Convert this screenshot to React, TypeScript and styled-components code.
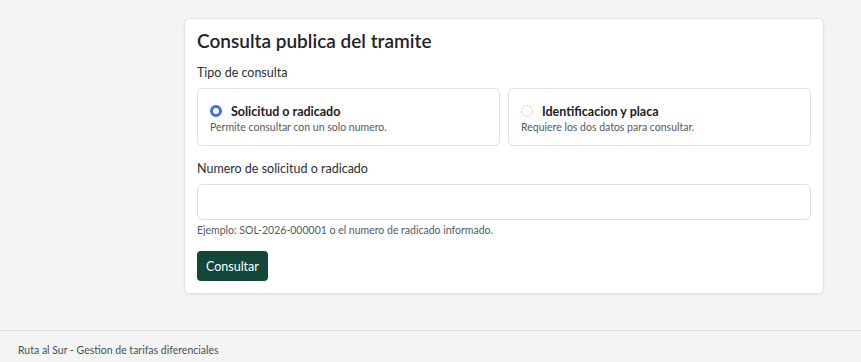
import { useState } from "react";
import styled, { createGlobalStyle } from "styled-components";

const GlobalStyle = createGlobalStyle`
  html, body {
    margin: 0;
    padding: 0;
    background: #f3f4f3;
  }
  body {
    font-family: "Segoe UI", Lato, "Noto Sans", sans-serif;
    color: #212529;
  }
  * {
    box-sizing: border-box;
  }
`;

const Page = styled.div`
  display: flex;
  flex-direction: column;
`;

const Main = styled.main`
  padding: 18px 37px 36px 184px;
`;

const Card = styled.section`
  background: #ffffff;
  border: 1px solid #e3e5e4;
  border-radius: 6px;
  box-shadow: 0 1px 3px rgba(0, 0, 0, 0.08);
  padding: 8px 12px 12px;
`;

const Title = styled.h1`
  margin: 0 0 9px;
  font-size: 19px;
  font-weight: 600;
  line-height: 28px;
  color: #1f2328;
`;

const Label = styled.div`
  font-size: 12.5px;
  line-height: 18px;
  margin-bottom: 6px;
  color: #2b2f33;
`;

const Options = styled.div`
  display: grid;
  grid-template-columns: 1fr 1fr;
  gap: 8px;
  margin-bottom: 14px;
`;

const Option = styled.label`
  display: flex;
  flex-direction: column;
  height: 58px;
  padding: 13px 12px 0;
  border: 1px solid #dfe1e3;
  border-radius: 5px;
  cursor: pointer;
`;

const OptionHead = styled.div`
  display: flex;
  align-items: center;
  gap: 9px;
  height: 18px;
`;

const Radio = styled.span<{ $checked: boolean }>`
  width: 12px;
  height: 12px;
  border-radius: 50%;
  flex: none;
  background: #fff;
  border: ${(p) => (p.$checked ? "3.5px solid #3f6ff2" : "1px solid #d9dcdf")};
`;

const OptionTitle = styled.span`
  font-size: 12.5px;
  font-weight: 700;
  color: #1d2125;
`;

const OptionText = styled.span`
  font-size: 10.5px;
  line-height: 15px;
  color: #55595e;
`;

const Input = styled.input`
  display: block;
  width: 100%;
  height: 36px;
  border: 1px solid #dcdfe1;
  border-radius: 6px;
  padding: 0 10px;
  font: inherit;
  outline: none;
`;

const Help = styled.div`
  font-size: 10.5px;
  line-height: 15px;
  margin-top: 3px;
  color: #55595e;
`;

const Button = styled.button`
  margin-top: 13px;
  height: 30px;
  padding: 0 9px;
  border: none;
  border-radius: 4px;
  background: #13473a;
  color: #ffffff;
  font-family: inherit;
  font-size: 12.5px;
  cursor: pointer;
`;

const Footer = styled.footer`
  border-top: 1px solid #dcdedd;
  padding: 12px 18px;
  font-size: 10.5px;
  line-height: 15px;
  color: #4b4f54;
`;

export default function App() {
  const [tipo, setTipo] = useState<"radicado" | "placa">("radicado");

  return (
    <Page>
      <GlobalStyle />
      <Main>
        <Card>
          <Title>Consulta publica del tramite</Title>
          <Label>Tipo de consulta</Label>
          <Options>
            <Option onClick={() => setTipo("radicado")}>
              <OptionHead>
                <Radio $checked={tipo === "radicado"} />
                <OptionTitle>Solicitud o radicado</OptionTitle>
              </OptionHead>
              <OptionText>Permite consultar con un solo numero.</OptionText>
            </Option>
            <Option onClick={() => setTipo("placa")}>
              <OptionHead>
                <Radio $checked={tipo === "placa"} />
                <OptionTitle>Identificacion y placa</OptionTitle>
              </OptionHead>
              <OptionText>Requiere los dos datos para consultar.</OptionText>
            </Option>
          </Options>
          <Label>Numero de solicitud o radicado</Label>
          <Input type="text" />
          <Help>Ejemplo: SOL-2026-000001 o el numero de radicado informado.</Help>
          <Button>Consultar</Button>
        </Card>
      </Main>
      <Footer>Ruta al Sur - Gestion de tarifas diferenciales</Footer>
    </Page>
  );
}
